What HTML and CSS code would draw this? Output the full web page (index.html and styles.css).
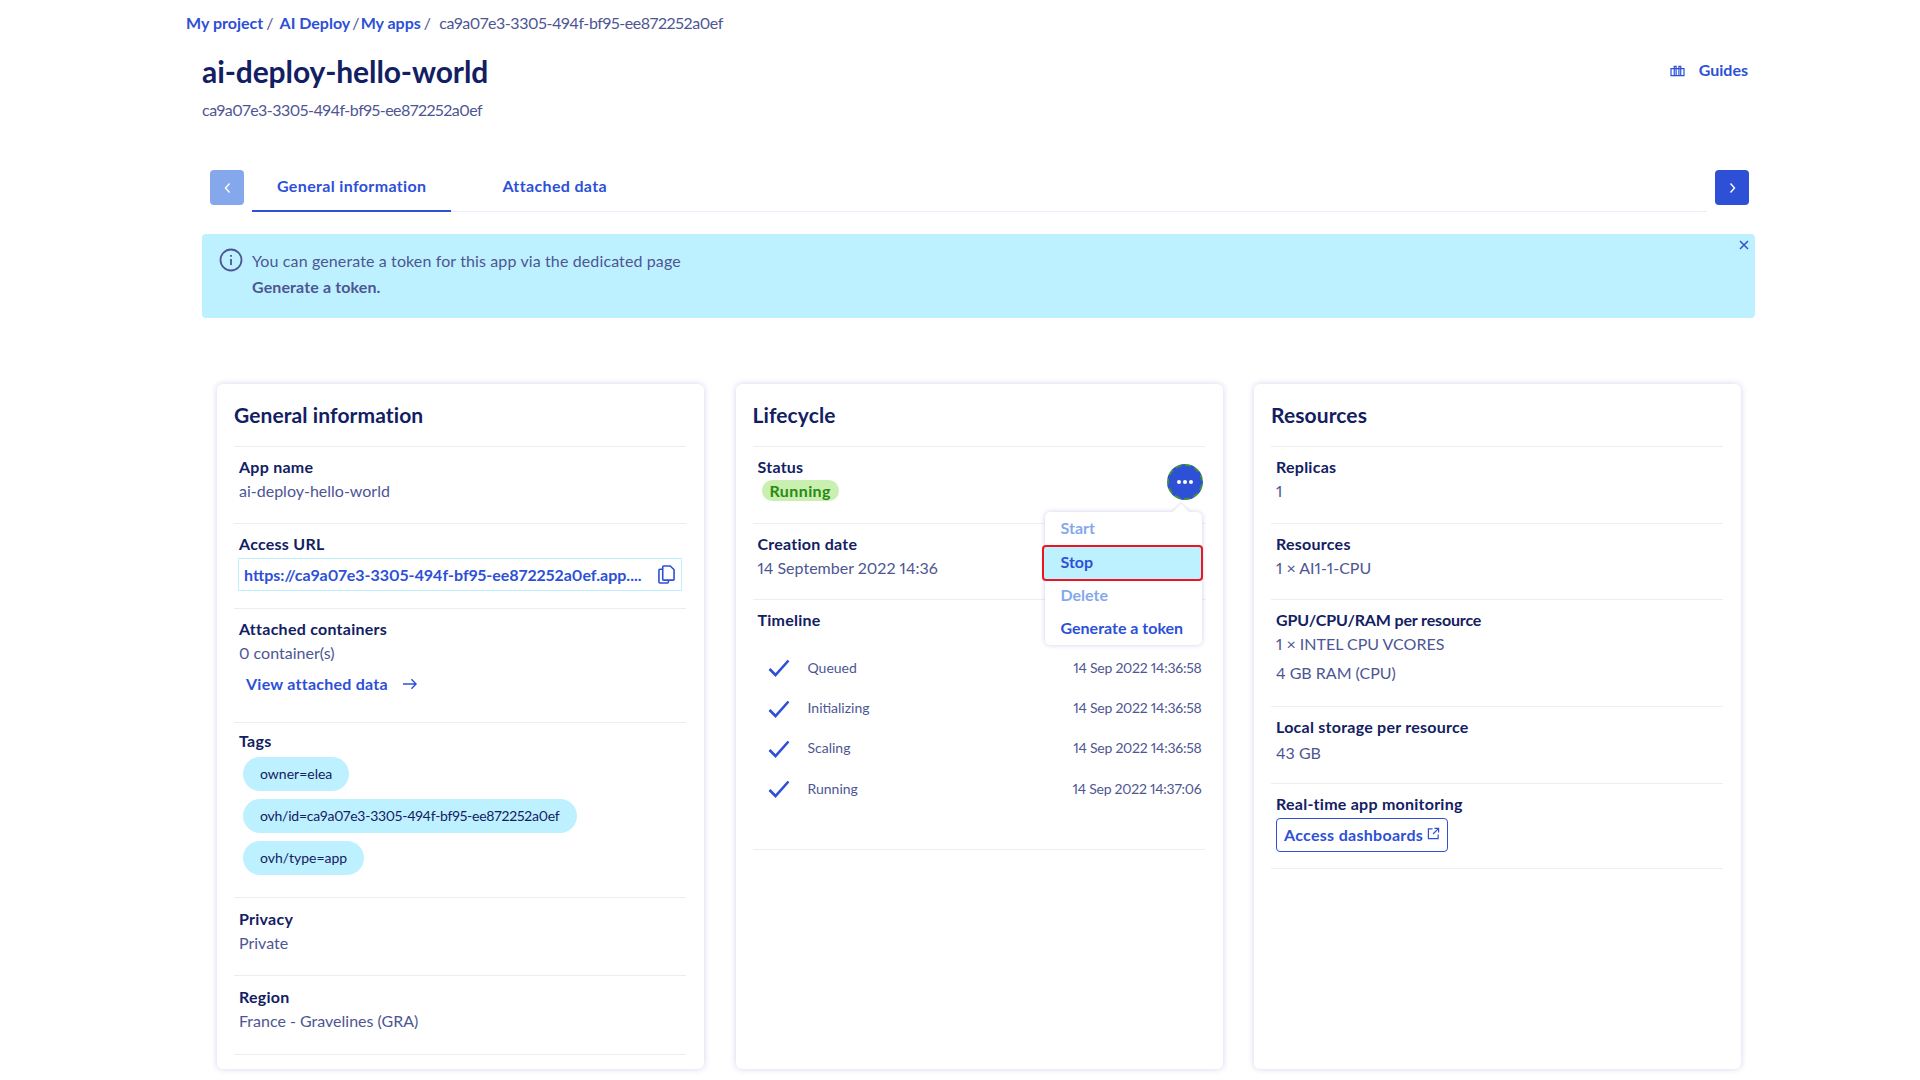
FILE: index.html
```html
<!DOCTYPE html>
<html lang="en">
  <head>
    <meta charset="UTF-8" />
    <meta name="viewport" content="width=device-width, initial-scale=1.0" />
    <title>ai-deploy-hello-world</title>
    <link rel="stylesheet" href="styles.css">
  </head>
  <body>
    <div class="page">
      <!-- Breadcrumb -->
      <nav class="breadcrumb">
        <a href="#">My project</a><span class="sep">/</span>
        <a href="#">AI Deploy</a><span class="sep sep-tight">/</span>
        <a href="#">My apps</a><span class="sep">/</span>
        <span class="crumb-current">ca9a07e3-3305-494f-bf95-ee872252a0ef</span>
      </nav>

      <!-- Title -->
      <header class="head">
        <div>
          <h1 class="title">ai-deploy-hello-world</h1>
          <p class="subtitle">ca9a07e3-3305-494f-bf95-ee872252a0ef</p>
        </div>
        <a href="#" class="guides">
          <svg class="guides-icon" viewBox="0 0 16 14" fill="none" stroke="currentColor" stroke-width="1.3">
            <path d="M1 5h14v7.5H1z" />
            <path d="M4.5 12.500V2.500h2v10M9.500 12.500V2.500h2v10" />
          </svg>
          Guides
        </a>
      </header>

      <!-- Tabs -->
      <div class="tabbar">
        <button class="tab-arrow tab-arrow-off">
          <svg viewBox="0 0 8 12" fill="none" stroke="currentColor" stroke-width="1.4"><path d="M6 1.500 2 6l4 4.500" /></svg>
        </button>
        <div class="tabs">
          <a href="#" class="tab tab-active">General information</a>
          <a href="#" class="tab">Attached data</a>
        </div>
        <button class="tab-arrow">
          <svg viewBox="0 0 8 12" fill="none" stroke="currentColor" stroke-width="1.4"><path d="M2 1.500 6 6l-4 4.500" /></svg>
        </button>
      </div>

      <!-- Info banner -->
      <div class="banner">
        <svg class="banner-icon" viewBox="0 0 24 24" fill="none" stroke="currentColor" stroke-width="1.800">
          <circle cx="12" cy="12" r="10.500" />
          <path d="M12 11v6M12 7v1.800" />
        </svg>
        <div class="banner-text">
          <div>You can generate a token for this app via the dedicated page</div>
          <div class="banner-link">Generate a token.</div>
        </div>
        <svg class="banner-close" viewBox="0 0 10 10" fill="none" stroke="currentColor" stroke-width="1.500">
          <path d="M1 1l8 8M9 1l-8 8" />
        </svg>
      </div>

      <!-- Cards -->
      <div class="cards">
        <section class="card">
          <h2 class="card-title">General information</h2>
          <div class="row">
            <div class="label">App name</div>
            <div class="value">ai-deploy-hello-world</div>
          </div>
          <div class="row row-url">
            <div class="label">Access URL</div>
            <div class="url-box">
              <span class="url-text">https://ca9a07e3-3305-494f-bf95-ee872252a0ef.app....</span>
              <svg class="copy-icon" viewBox="0 0 18 20" fill="none" stroke="currentColor" stroke-width="1.700">
                <path d="M4.500 4.500H2a1 1 0 0 0-1 1V18a1 1 0 0 0 1 1h8a1 1 0 0 0 1-1v-2" />
                <path d="M6 1h7l4 4v10a1 1 0 0 1-1 1H6a1 1 0 0 1-1-1V2a1 1 0 0 1 1-1z" />
              </svg>
            </div>
          </div>
          <div class="row row-containers">
            <div class="label">Attached containers</div>
            <div class="value">0 container(s)</div>
            <a href="#" class="view-link">
              View attached data
              <svg class="view-arrow" viewBox="0 0 16 12" fill="none" stroke="currentColor" stroke-width="1.500"><path d="M1 6h14M10 1l5 5-5 5" /></svg>
            </a>
          </div>
          <div class="row row-tags">
            <div class="label">Tags</div>
            <div class="tag-list">
              <span class="tag">owner=elea</span>
              <span class="tag tag-id">ovh/id=ca9a07e3-3305-494f-bf95-ee872252a0ef</span>
              <span class="tag">ovh/type=app</span>
            </div>
          </div>
          <div class="row row-tall">
            <div class="label">Privacy</div>
            <div class="value">Private</div>
          </div>
          <div class="row row-tall">
            <div class="label">Region</div>
            <div class="value">France - Gravelines (GRA)</div>
          </div>
        </section>

        <section class="card">
          <h2 class="card-title">Lifecycle</h2>
          <div class="row row-status">
            <div class="label">Status</div>
            <span class="badge">Running</span>
            <button class="more-btn"><i></i><i></i><i></i></button>
            <!-- Action menu -->
            <div class="menu">
              <div class="menu-item menu-off">Start</div>
              <div class="menu-item menu-hl">Stop</div>
              <div class="menu-item menu-off">Delete</div>
              <div class="menu-item">Generate a token</div>
            </div>
          </div>
          <div class="row">
            <div class="label">Creation date</div>
            <div class="value">14 September 2022 14:36</div>
          </div>
          <div class="row row-timeline">
            <div class="label">Timeline</div>
            <div class="tl-list">
              <div class="tl-row">
                <svg class="tl-check" viewBox="0 0 22 18" fill="none" stroke="currentColor" stroke-width="2.600"><path d="M1.500 10l6 6L20.500 1.500" /></svg>
                <span class="tl-name">Queued</span>
                <span class="tl-date">14 Sep 2022 14:36:58</span>
              </div>
              <div class="tl-row">
                <svg class="tl-check" viewBox="0 0 22 18" fill="none" stroke="currentColor" stroke-width="2.600"><path d="M1.500 10l6 6L20.500 1.500" /></svg>
                <span class="tl-name">Initializing</span>
                <span class="tl-date">14 Sep 2022 14:36:58</span>
              </div>
              <div class="tl-row">
                <svg class="tl-check" viewBox="0 0 22 18" fill="none" stroke="currentColor" stroke-width="2.600"><path d="M1.500 10l6 6L20.500 1.500" /></svg>
                <span class="tl-name">Scaling</span>
                <span class="tl-date">14 Sep 2022 14:36:58</span>
              </div>
              <div class="tl-row">
                <svg class="tl-check" viewBox="0 0 22 18" fill="none" stroke="currentColor" stroke-width="2.600"><path d="M1.500 10l6 6L20.500 1.500" /></svg>
                <span class="tl-name">Running</span>
                <span class="tl-date">14 Sep 2022 14:37:06</span>
              </div>
            </div>
          </div>
        </section>

        <section class="card">
          <h2 class="card-title">Resources</h2>
          <div class="row">
            <div class="label">Replicas</div>
            <div class="value">1</div>
          </div>
          <div class="row">
            <div class="label">Resources</div>
            <div class="value">1 × AI1-1-CPU</div>
          </div>
          <div class="row row-gpu">
            <div class="label">GPU/CPU/RAM per resource</div>
            <div class="value">1 × INTEL CPU VCORES</div>
            <div class="value value-next">4 GB RAM (CPU)</div>
          </div>
          <div class="row row-local">
            <div class="label">Local storage per resource</div>
            <div class="value">43 GB</div>
          </div>
          <div class="row row-monitor">
            <div class="label">Real-time app monitoring</div>
            <a href="#" class="dash-btn">
              Access dashboards
              <svg class="dash-icon" viewBox="0 0 14 14" fill="none" stroke="currentColor" stroke-width="1.300">
                <path d="M6 2H1.500v10.500H12V8M8 1.500h4.500V6M12.500 1.500 6.500 7.500" />
              </svg>
            </a>
          </div>
        </section>
      </div>
    </div>
  </body>
</html>
```

FILE: styles.css
```css
/* Page */
html,
body {
  margin: 0;
  padding: 0;
  height: 100%;
  background-color: white;
  overflow: hidden;
}

body {
  font-family: 'Lato', 'Noto Sans', sans-serif;
  font-size: 16px;
  color: #4d5693;
  font-variant-numeric: proportional-nums;
}

a {
  color: #2d50d7;
  text-decoration: none;
}

.page {
  padding: 11px 165px 0 202px;
}

/* Breadcrumb */
.breadcrumb {
  margin-left: -16px;
  line-height: 24px;
  font-size: 16px;
}

.breadcrumb a {
  font-weight: 700;
}

.sep {
  margin: 0 2px 0 3px;
}

.sep-tight {
  margin: 0 -3px 0 2px;
}

.crumb-current {
  margin-left: 2px;
  letter-spacing: -0.4px;
}

/* Title */
.head {
  display: flex;
  justify-content: space-between;
  align-items: flex-start;
  margin-top: 16px;
  padding-right: 7px;
}

.title {
  margin: 0;
  font-size: 30px;
  line-height: 40px;
  font-weight: 700;
  letter-spacing: -0.1px;
  color: #122063;
}

.subtitle {
  margin: 7px 0 0;
  line-height: 24px;
  letter-spacing: -0.5px;
}

.guides {
  display: flex;
  align-items: center;
  gap: 14px;
  margin-top: 7px;
  line-height: 24px;
  font-weight: 700;
}

.guides-icon {
  width: 15px;
  height: 13px;
}

/* Tabs */
.tabbar {
  display: flex;
  align-items: flex-start;
  gap: 8px;
  margin-top: 48px;
  padding: 0 6px 0 8px;
}

.tab-arrow {
  flex: none;
  display: flex;
  justify-content: center;
  align-items: center;
  width: 34px;
  height: 35px;
  padding: 0;
  border: none;
  border-radius: 4px;
  background-color: #2d50d7;
  color: white;
}

.tab-arrow svg {
  width: 9px;
  height: 12px;
}

.tab-arrow-off {
  background-color: #85a8ec;
}

.tabs {
  flex: 1;
  display: flex;
  gap: 26px;
  height: 42px;
  box-sizing: border-box;
  border-bottom: 1px solid #e6eefb;
}

.tab {
  height: 42px;
  box-sizing: border-box;
  padding: 4px 25px 0;
  line-height: 24px;
  font-weight: 700;
  letter-spacing: 0.35px;
}

.tab-active {
  border-bottom: 2px solid #2d50d7;
}

/* Info banner */
.banner {
  position: relative;
  display: flex;
  gap: 9px;
  height: 84px;
  box-sizing: border-box;
  margin-top: 22px;
  padding: 14px 17px;
  border-radius: 4px;
  background-color: #bef1ff;
}

.banner-icon {
  flex: none;
  width: 24px;
  height: 24px;
}

.banner-text {
  line-height: 26px;
  letter-spacing: 0.12px;
}

.banner-link {
  font-weight: 700;
}

.banner-close {
  position: absolute;
  top: 6px;
  right: 6px;
  width: 10px;
  height: 10px;
  color: #2d50d7;
}

/* Cards */
.cards {
  display: grid;
  grid-template-columns: repeat(3, 1fr);
  gap: 31.5px;
  margin-top: 66px;
  padding: 0 14px 0 15px;
}

.card {
  height: 685px;
  box-sizing: border-box;
  padding: 0 18px 0 17px;
  border-radius: 6px;
  background-color: white;
  box-shadow: 0 0 6px rgba(0, 14, 156, 0.18);
}

.card-title {
  margin: 0;
  height: 63px;
  box-sizing: border-box;
  padding-top: 15px;
  line-height: 32px;
  font-size: 21px;
  font-weight: 700;
  letter-spacing: 0.1px;
  color: #122063;
  border-bottom: 1px solid #eceef5;
}

.row {
  position: relative;
  min-height: 76.5px;
  box-sizing: border-box;
  padding: 8px 4px 0 5px;
  border-bottom: 1px solid #eceef5;
}

.row-tall {
  min-height: 78.5px;
  padding-top: 9px;
}

.label {
  line-height: 24px;
  font-weight: 700;
  letter-spacing: 0.25px;
  color: #122063;
}

.value {
  line-height: 24px;
}

.value-next {
  margin-top: 5px;
}

/* Access URL */
.row-url {
  height: 85px;
}

.url-box {
  display: flex;
  align-items: center;
  justify-content: space-between;
  height: 33px;
  box-sizing: border-box;
  margin: 2px 0 0 -1px;
  padding: 0 6px 0 5px;
  border: 1px solid #bef1ff;
}

.url-text {
  white-space: nowrap;
  font-weight: 700;
  color: #2d50d7;
}

.copy-icon {
  width: 17px;
  height: 19px;
  color: #2d50d7;
}

/* Attached containers */
.row-containers {
  height: 114px;
}

.view-link {
  display: inline-flex;
  align-items: center;
  gap: 14px;
  margin: 7px 0 0 7px;
  line-height: 24px;
  font-weight: 700;
  letter-spacing: 0.25px;
}

.view-arrow {
  width: 15px;
  height: 12px;
}

/* Tags */
.row-tags {
  height: 175px;
  padding-top: 6px;
}

.tag-list {
  display: flex;
  flex-direction: column;
  align-items: flex-start;
  gap: 8px;
  margin: 4px 0 0 4px;
}

.tag {
  height: 34px;
  box-sizing: border-box;
  padding: 0 17px;
  border-radius: 17px;
  background-color: #bef1ff;
  line-height: 33px;
  font-size: 14px;
  color: #122063;
}

.tag-id {
  letter-spacing: -0.23px;
}

/* Lifecycle */
.badge {
  display: block;
  width: fit-content;
  height: 21px;
  margin: 1px 0 0 4px;
  padding: 0 8px;
  border-radius: 11px;
  background-color: #c9f0b0;
  line-height: 21px;
  font-weight: 700;
  letter-spacing: 0.4px;
  color: #2a8a12;
}

.more-btn {
  position: absolute;
  top: 17px;
  right: 2px;
  display: flex;
  justify-content: center;
  align-items: center;
  gap: 2px;
  width: 36px;
  height: 36px;
  padding: 0;
  border: 2px dashed #3f8f3a;
  border-radius: 50%;
  background-color: #2d50d7;
}

.more-btn i {
  width: 4px;
  height: 4px;
  border-radius: 50%;
  background-color: white;
}

.menu {
  position: absolute;
  top: 65px;
  right: 3px;
  z-index: 5;
  width: 157px;
  height: 133px;
  box-sizing: border-box;
  border-radius: 5px;
  background-color: white;
  box-shadow: 0 0 5px rgba(0, 14, 156, 0.2);
  font-weight: 700;
  color: #2d50d7;
}

.menu::before {
  content: '';
  position: absolute;
  top: -6px;
  right: 15px;
  width: 12px;
  height: 12px;
  background-color: white;
  transform: rotate(45deg);
  box-shadow: -1px -1px 2px rgba(0, 14, 156, 0.1);
}

.menu-item {
  position: relative;
  height: 33px;
  padding: 0 16px;
  line-height: 31px;
}

.menu-off {
  color: #85a8ec;
}

.menu-hl {
  height: 36px;
  margin: 0 -1px -2px -3px;
  box-sizing: border-box;
  padding-left: 17px;
  border: 2px solid #ee1420;
  border-radius: 4px;
  background-color: #bef1ff;
  line-height: 29px;
}

/* Timeline */
.row-timeline {
  height: 250px;
}

.tl-list {
  margin-top: 15px;
}

.tl-row {
  display: flex;
  align-items: center;
  height: 40.4px;
  font-size: 14px;
}

.tl-check {
  width: 22px;
  height: 18px;
  margin: 2px 18px 0 10px;
  color: #2d50d7;
}

.tl-date {
  margin-left: auto;
  margin-right: -1px;
  letter-spacing: -0.25px;
}

/* Resources */
.row-gpu {
  height: 107px;
}

.row-gpu .label {
  letter-spacing: -0.15px;
}

.row-gpu .value:first-of-type {
  margin-top: 4px;
}

.row-local .value {
  margin-top: 2px;
}

.row-monitor {
  height: 85px;
}

.dash-btn {
  display: inline-flex;
  align-items: center;
  gap: 4px;
  height: 34px;
  box-sizing: border-box;
  margin-top: 2px;
  padding: 0 7px;
  border: 1px solid #2d50d7;
  border-radius: 4px;
  font-weight: 700;
  letter-spacing: 0.3px;
}

.dash-icon {
  width: 13px;
  height: 13px;
  margin-bottom: 3px;
}
```
